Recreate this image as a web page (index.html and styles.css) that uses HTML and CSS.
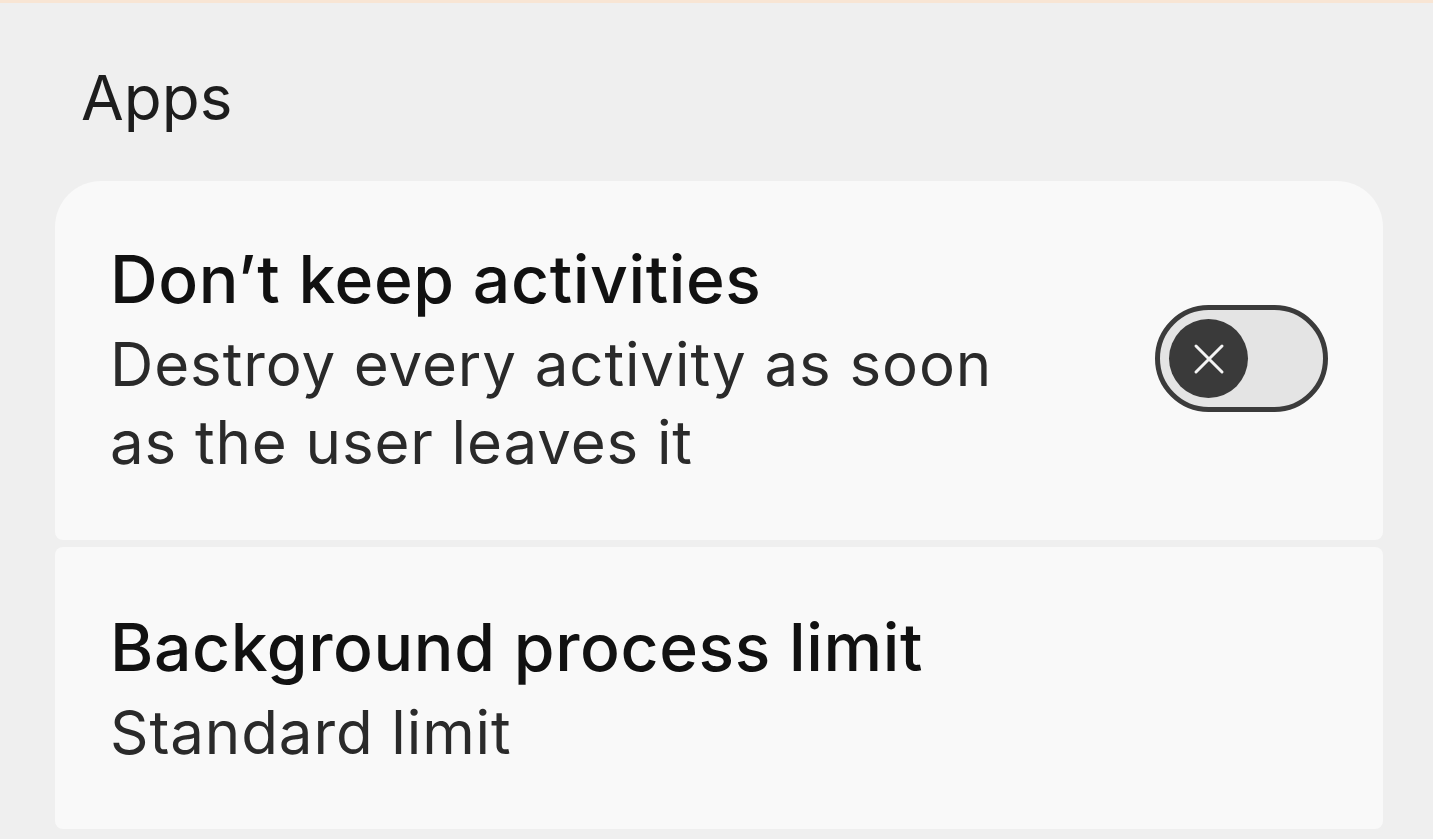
FILE: index.html
```html
<!DOCTYPE html>
<html lang="en">
<head>
<meta charset="utf-8">
<title>Apps</title>
<link rel="stylesheet" href="styles.css">
</head>
<body>
  <div class="topline"></div>
  <main class="screen">
    <h2 class="section-title">Apps</h2>
    <div class="group">
      <div class="card card-first">
        <div class="card-text">
          <div class="item-title">Don’t keep activities</div>
          <div class="item-summary">Destroy every activity as soon<br>as the user leaves it</div>
        </div>
        <div class="switch" role="switch" aria-checked="false">
          <div class="thumb">
            <svg viewBox="0 0 32 32" width="32" height="32" aria-hidden="true">
              <path d="M3 3 L29 29 M29 3 L3 29" stroke="#f4f4f4" stroke-width="3" stroke-linecap="round" fill="none"/>
            </svg>
          </div>
        </div>
      </div>
      <div class="card card-last">
        <div class="card-text">
          <div class="item-title">Background process limit</div>
          <div class="item-summary">Standard limit</div>
        </div>
      </div>
    </div>
  </main>
</body>
</html>
```

FILE: styles.css
```css
html, body {
  margin: 0;
  padding: 0;
}

body {
  width: 1433px;
  height: 839px;
  overflow: hidden;
  background: #efefef;
  font-family: "Inter", "Open Sans", sans-serif;
  color: #1b1b1b;
}

.topline {
  height: 3px;
  background: #f8e5d4;
}

.screen {
  padding: 0 50px 0 55px;
}

.section-title {
  margin: 0;
  padding: 55px 0 0 26px;
  height: 120px;
  box-sizing: border-box;
  font-size: 62px;
  font-weight: 400;
  line-height: 80px;
  color: #1d1d1d;
}

.group {
  margin-top: 58px;
  display: flex;
  flex-direction: column;
  gap: 7px;
}

.card {
  background: #f9f9f9;
  display: flex;
  align-items: flex-start;
  justify-content: space-between;
  box-sizing: border-box;
  padding: 0 55px;
}

.card-first {
  height: 359px;
  padding-top: 58px;
  border-radius: 46px 46px 8px 8px;
}

.card-last {
  height: 282px;
  padding-top: 60px;
  border-radius: 8px;
}

.item-title {
  font-size: 66px;
  font-weight: 500;
  line-height: 80px;
  letter-spacing: 0.6px;
  color: #111;
}

.item-summary {
  margin-top: 6px;
  font-size: 60px;
  line-height: 78px;
  letter-spacing: 0.9px;
  color: #2a2a2a;
}

.switch {
  margin-top: 66px;
  width: 173px;
  height: 107px;
  box-sizing: border-box;
  border: 5px solid #3b3b3b;
  border-radius: 54px;
  background: #e4e4e4;
  display: flex;
  align-items: center;
  padding-left: 9px;
}

.thumb {
  width: 79px;
  height: 79px;
  border-radius: 50%;
  background: #3a3a3a;
  display: flex;
  align-items: center;
  justify-content: center;
}
```
